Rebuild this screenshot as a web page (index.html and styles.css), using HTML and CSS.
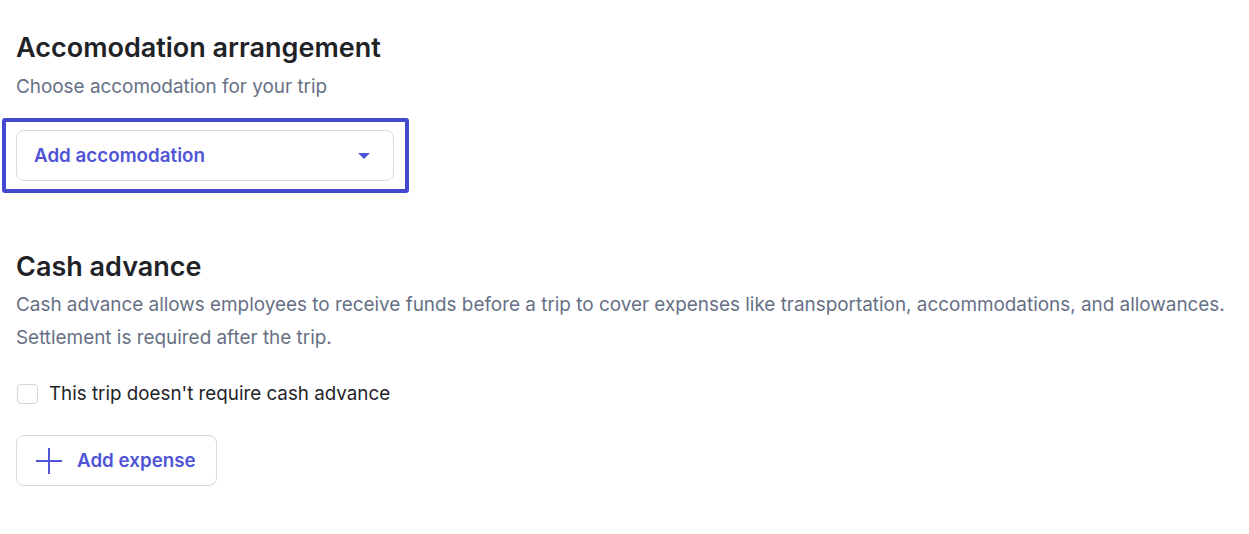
FILE: index.html
```html
<!DOCTYPE html>
<html lang="en">
<head>
    <meta charset="UTF-8">
    <title>Trip request</title>
    <link rel="stylesheet" href="styles.css">
</head>
<body>
<div class="page">
    <section class="block">
        <h2>Accomodation arrangement</h2>
        <p class="hint">Choose accomodation for your trip</p>
        <div class="focus-ring">
            <button type="button" class="select">
                <span>Add accomodation</span>
                <svg class="caret" width="14" height="8" viewBox="0 0 14 8"><path d="M1 1h12L7 7z" fill="currentColor"/></svg>
            </button>
        </div>
    </section>

    <section class="block cash">
        <h2>Cash advance</h2>
        <p class="hint">Cash advance allows employees to receive funds before a trip to cover expenses like transportation, accommodations, and allowances. Settlement is required after the trip.</p>
        <label class="check">
            <input type="checkbox">
            <span class="box"></span>
            <span>This trip doesn't require cash advance</span>
        </label>
        <button type="button" class="add-btn">
            <svg width="26" height="26" viewBox="0 0 26 26"><path d="M13 0v26M0 13h26" stroke="currentColor" stroke-width="2"/></svg>
            <span>Add expense</span>
        </button>
    </section>
</div>
</body>
</html>
```

FILE: styles.css
```css
* {
    margin: 0;
    padding: 0;
    box-sizing: border-box;
}

body {
    font-family: Inter, "Noto Sans", sans-serif;
    background: #fff;
    color: #1f2328;
}

.page {
    padding: 31px 16px 0;
    width: 1249px;
}

h2 {
    font-size: 27px;
    font-weight: 600;
    line-height: 34px;
    color: #1f2328;
}

.hint {
    font-size: 18.9px;
    line-height: 33px;
    color: #667085;
    margin-top: 5px;
}

/* Dropdown with focus highlight */
.focus-ring {
    margin: 15px 0 0 -14px;
    width: 407px;
    border: 4px solid #4348cf;
    border-radius: 3px;
    padding: 8px 11px 8px 10px;
}

.select {
    width: 378px;
    height: 51px;
    display: flex;
    align-items: center;
    justify-content: space-between;
    padding: 0 22px 0 17px;
    background: #fff;
    border: 1px solid #d5d9e0;
    border-radius: 8px;
    font-family: inherit;
    font-size: 18.8px;
    font-weight: 600;
    color: #4f55d6;
    cursor: pointer;
}

.caret {
    color: #4f55d6;
}

/* Cash advance */
.cash {
    margin-top: 57px;
}

.cash .hint {
    margin-top: 4px;
}

.check {
    display: flex;
    align-items: center;
    gap: 11px;
    margin-top: 27px;
    font-size: 18.8px;
    line-height: 26px;
    color: #1f2328;
    cursor: pointer;
}

.check input {
    display: none;
}

.check .box {
    width: 21px;
    height: 20px;
    border: 1.5px solid #d1d5dc;
    border-radius: 4px;
    margin-left: 1px;
}

.add-btn {
    margin-top: 28px;
    height: 51px;
    display: flex;
    align-items: center;
    gap: 15px;
    padding: 0 20px 0 19px;
    background: #fff;
    border: 1px solid #d5d9e0;
    border-radius: 8px;
    font-family: inherit;
    font-size: 18.8px;
    font-weight: 600;
    color: #4f55d6;
    cursor: pointer;
}

.add-btn svg {
    color: #4f55d6;
}
```
